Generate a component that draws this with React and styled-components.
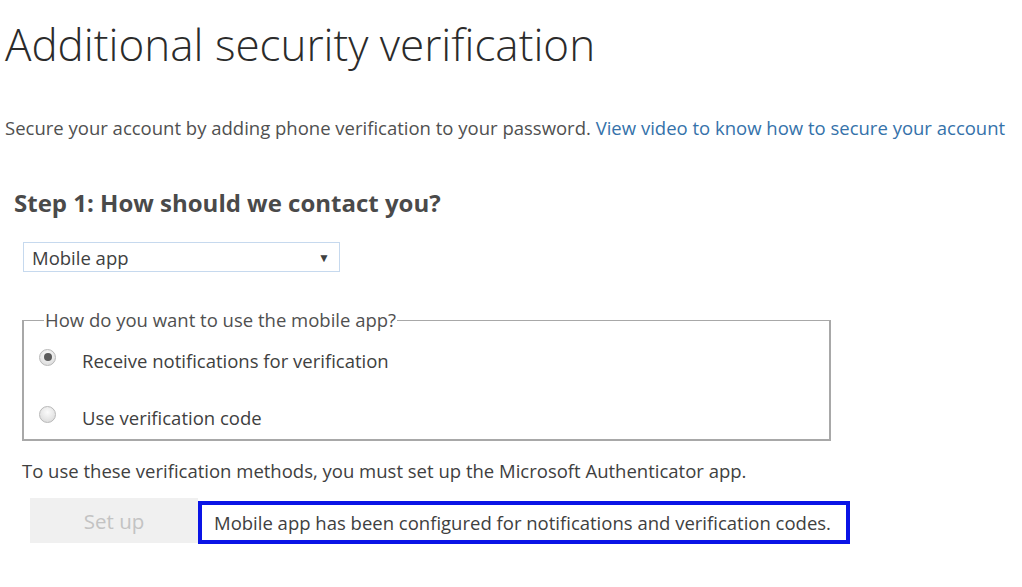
import React, { useState } from "react";
import styled, { createGlobalStyle } from "styled-components";

const GlobalStyle = createGlobalStyle`
  html, body {
    margin: 0;
    padding: 0;
    background: #ffffff;
  }
  body {
    font-family: "Open Sans", "Noto Sans", Arial, sans-serif;
    color: #404040;
  }
`;

const Page = styled.div`
  width: 1022px;
  height: 587px;
  overflow: hidden;
  padding: 18px 0 0 5px;
  box-sizing: border-box;
`;

const Title = styled.h1`
  margin: 0;
  font-weight: 300;
  font-size: 44px;
  line-height: 52px;
  color: #2b2b2b;
`;

const Intro = styled.p`
  margin: 47px 0 0 0;
  font-size: 18.5px;
  line-height: 22px;
  color: #505050;
  white-space: nowrap;
`;

const Link = styled.a`
  color: #3572aa;
  text-decoration: none;
`;

const StepTitle = styled.h2`
  margin: 50px 0 0 9px;
  font-size: 24px;
  line-height: 28px;
  font-weight: 700;
  color: #4a4a4a;
`;

const SelectBox = styled.div`
  margin: 25px 0 0 18px;
  width: 317px;
  height: 30px;
  box-sizing: border-box;
  border: 1px solid #c6d9ee;
  display: flex;
  align-items: center;
  justify-content: space-between;
  padding: 0 9px 0 8px;
  font-size: 18.5px;
  color: #404040;
`;

const Arrow = styled.span`
  font-size: 12px;
  color: #404040;
`;

const Group = styled.fieldset`
  margin: 36px 0 0 17px;
  width: 809px;
  box-sizing: border-box;
  border: 2px solid #a8a8a8;
  border-top-width: 1px;
  padding: 0;
  display: flex;
  flex-direction: column;
  gap: 7px;
`;

const Legend = styled.legend`
  padding: 0 1px;
  margin-left: 20px;
  font-size: 18.5px;
  color: #505050;
  line-height: 24px;
`;

const Option = styled.label`
  display: flex;
  align-items: center;
  height: 50px;
  font-size: 18.5px;
  color: #404040;
  cursor: pointer;
`;

const OptionText = styled.span`
  padding-top: 6px;
`;

const Radio = styled.span`
  width: 17px;
  height: 17px;
  margin-left: 15px;
  margin-right: 26px;
  border-radius: 50%;
  box-sizing: border-box;
  border: 1px solid #b8b8b8;
  background: radial-gradient(circle at 50% 35%, #fbfbfb, #d6d6d6);
  display: flex;
  align-items: center;
  justify-content: center;
  &::after {
    content: "";
    width: 8px;
    height: 8px;
    border-radius: 50%;
    background: ${(p) => (p.$checked ? "#5a5a5a" : "transparent")};
  }
`;

const Note = styled.p`
  margin: 18px 0 0 17px;
  font-size: 18.5px;
  line-height: 24px;
  color: #404040;
  white-space: nowrap;
`;

const ActionRow = styled.div`
  display: flex;
  align-items: flex-start;
  margin: 15px 0 0 25px;
`;

const SetupButton = styled.button`
  width: 168px;
  height: 45px;
  border: none;
  background: #f0f0f0;
  color: #c3c3c3;
  font-family: inherit;
  font-size: 20.5px;
  padding: 0;
`;

const Status = styled.div`
  margin-top: 3px;
  height: 43px;
  box-sizing: border-box;
  border: 4px solid #0a14e6;
  display: flex;
  align-items: center;
  padding: 0 15px 0 12px;
  font-size: 18.5px;
  color: #404040;
  white-space: nowrap;
`;

export default function App() {
  const [mode, setMode] = useState("notify");
  return (
    <>
      <GlobalStyle />
      <Page>
        <Title>Additional security verification</Title>
        <Intro>
          Secure your account by adding phone verification to your password.{" "}
          <Link href="#">View video to know how to secure your account</Link>
        </Intro>
        <StepTitle>Step 1: How should we contact you?</StepTitle>
        <SelectBox>
          <span>Mobile app</span>
          <Arrow>▼</Arrow>
        </SelectBox>
        <Group>
          <Legend>How do you want to use the mobile app?</Legend>
          <Option onClick={() => setMode("notify")}>
            <Radio $checked={mode === "notify"} />
            <OptionText>Receive notifications for verification</OptionText>
          </Option>
          <Option onClick={() => setMode("code")}>
            <Radio $checked={mode === "code"} />
            <OptionText>Use verification code</OptionText>
          </Option>
        </Group>
        <Note>
          To use these verification methods, you must set up the Microsoft
          Authenticator app.
        </Note>
        <ActionRow>
          <SetupButton disabled>Set up</SetupButton>
          <Status>
            Mobile app has been configured for notifications and verification
            codes.
          </Status>
        </ActionRow>
      </Page>
    </>
  );
}
